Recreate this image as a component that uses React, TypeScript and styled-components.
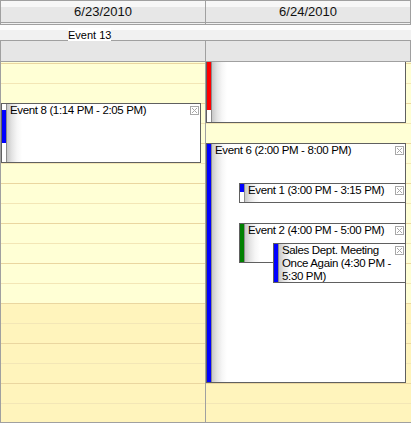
import styled, { createGlobalStyle } from "styled-components"

const GlobalStyle = createGlobalStyle`
	body {
		margin: 0;
		background: #fff;
	}
`

const SLOT_H = 20
const START_HOUR = 11
const SLOT_COUNT = 20
const BUSINESS_END = 18

interface CalEvent {
	id: string
	text: string
	color: string
	top: number
	height: number
	left: number
	width: number
	/** colour bar inside the strip, px relative to box inner top; full height if omitted */
	bar?: { top: number; height: number }
}

const day1Events: CalEvent[] = [
	{
		id: "e8",
		text: "Event 8 (1:14 PM - 2:05 PM)",
		color: "#0000ff",
		top: 80,
		height: 60,
		left: 0,
		width: 200,
		bar: { top: 6, height: 33 }
	}
]

// the first event is scrolled up, only its lower part is in view
const day2Events: CalEvent[] = [
	{
		id: "e4",
		text: "",
		color: "#ff0000",
		top: 20,
		height: 80,
		left: 0,
		width: 200,
		bar: { top: 0, height: 66 }
	},
	{
		id: "e6",
		text: "Event 6 (2:00 PM - 8:00 PM)",
		color: "#0000ff",
		top: 120,
		height: 240,
		left: 0,
		width: 200
	},
	{
		id: "e1",
		text: "Event 1 (3:00 PM - 3:15 PM)",
		color: "#0000ff",
		top: 160,
		height: 20,
		left: 33,
		width: 167,
		bar: { top: 0, height: 8 }
	},
	{
		id: "e2",
		text: "Event 2 (4:00 PM - 5:00 PM)",
		color: "#008000",
		top: 200,
		height: 40,
		left: 33,
		width: 167
	},
	{
		id: "sales",
		text: "Sales Dept. Meeting Once Again (4:30 PM - 5:30 PM)",
		color: "#0000ff",
		top: 220,
		height: 40,
		left: 67,
		width: 133
	}
]

const slots = Array.from({ length: SLOT_COUNT }, (_, i) => {
	const hour = START_HOUR + i / 2
	return { key: i, isHour: i % 2 === 0, business: hour < BUSINESS_END }
})

const CloseIcon = () => (
	<svg width="9" height="9" viewBox="0 0 9 9">
		<rect x="0.5" y="0.5" width="8" height="8" fill="#fff" stroke="#a8a8a8" />
		<path d="M2 2 L7 7 M7 2 L2 7" stroke="#a8a8a8" strokeWidth="1" />
	</svg>
)

const EventBox = ({ ev }: { ev: CalEvent }) => (
	<Box style={{ top: ev.top, height: ev.height, left: ev.left, width: ev.width }}>
		<Strip>
			<Bar
				$color={ev.color}
				style={ev.bar ? { top: ev.bar.top, height: ev.bar.height } : { top: 0, bottom: 0 }}
			/>
		</Strip>
		<EventBody>{ev.text}</EventBody>
		<Close>
			<CloseIcon />
		</Close>
	</Box>
)

const DayColumn = ({ events }: { events: CalEvent[] }) => (
	<Column>
		{slots.map((s) => (
			<Slot key={s.key} $hour={s.isHour} $business={s.business} />
		))}
		{events.map((ev) => (
			<EventBox key={ev.id} ev={ev} />
		))}
	</Column>
)

const App = () => {
	return (
		<Calendar>
			<GlobalStyle />
			<Header>
				<HeaderCol>
					<DateCell>6/23/2010</DateCell>
					<HeaderGap />
				</HeaderCol>
				<HeaderCol>
					<DateCell>6/24/2010</DateCell>
					<HeaderGap />
				</HeaderCol>
			</Header>
			<AllDayRow>
				<AllDayText>Event 13</AllDayText>
			</AllDayRow>
			<GrayRow>
				<GrayCell />
				<GrayCell />
			</GrayRow>
			<Viewport>
				<ScrollContent>
					<DayColumn events={day1Events} />
					<DayColumn events={day2Events} />
				</ScrollContent>
			</Viewport>
		</Calendar>
	)
}

export default App

// Styled Components

const Calendar = styled.div`
	width: 411px;
	height: 423px;
	overflow: hidden;
	font-family: "Liberation Sans", Arial, sans-serif;
	color: #000;
`

const Header = styled.div`
	display: grid;
	grid-template-columns: 204px 204px;
	column-gap: 1px;
	background: #a0a0a0;
	border: 1px solid #a0a0a0;
`

const HeaderCol = styled.div`
	display: flex;
	flex-direction: column;
`

const DateCell = styled.div`
	height: 21px;
	line-height: 21px;
	font-size: 13px;
	text-align: center;
	color: #111;
	background: linear-gradient(#f7f7f7 0, #f7f7f7 6px, #e7e7e7 6px);
	border-bottom: 1px solid #a0a0a0;
`

const HeaderGap = styled.div`
	height: 1px;
	background: #f0f0f0;
`

const AllDayRow = styled.div`
	height: 15px;
	background: linear-gradient(#fcfcfc 0, #fcfcfc 5px, #f1f1f1 5px);
`

const AllDayText = styled.span`
	display: inline-block;
	margin-left: 68px;
	padding-top: 1px;
	line-height: 13px;
	font-size: 11px;
	background: #fff;
`

const GrayRow = styled.div`
	display: grid;
	grid-template-columns: 204px 204px;
	column-gap: 1px;
	background: #a0a0a0;
	border: 1px solid #a0a0a0;
`

const GrayCell = styled.div`
	height: 20px;
	background: #e6e6e6;
`

const Viewport = styled.div`
	height: 360px;
	overflow: hidden;
	border-left: 1px solid #a0a0a0;
	border-bottom: 1px solid #a0a0a0;
`

const ScrollContent = styled.div`
	display: grid;
	grid-template-columns: 204px 205px;
	column-gap: 1px;
	background: #a0a0a0;
	margin-top: -39px;
`

const Column = styled.div`
	position: relative;
	display: flex;
	flex-direction: column;
`

const Slot = styled.div<{ $hour: boolean; $business: boolean }>`
	height: ${SLOT_H - 1}px;
	border-top: 1px solid ${(p) => (p.$hour ? "#ead6a0" : "#f3e6b6")};
	background: ${(p) => (p.$business ? "#ffffd5" : "#fff4bc")};
`

const Box = styled.div`
	position: absolute;
	box-sizing: border-box;
	display: flex;
	border: 1px solid #606060;
	background: #fff;
	overflow: hidden;
`

const Strip = styled.div`
	position: relative;
	flex: 0 0 4px;
	background: #fff;
	border-right: 1px solid #8c8c8c;
`

const Bar = styled.div<{ $color: string }>`
	position: absolute;
	left: 0;
	right: 0;
	background: ${(p) => p.$color};
`

const EventBody = styled.div`
	flex: 1;
	padding: 0 4px 0 3px;
	font-size: 11.5px;
	line-height: 13px;
	letter-spacing: -0.35px;
	color: #000;
	background: linear-gradient(to right, #c8c8c8 0, #e4e4e4 5px, #f6f6f6 10px, #fff 15px);
`

const Close = styled.div`
	position: absolute;
	top: 2px;
	right: 1px;
	width: 9px;
	height: 9px;
	line-height: 0;
`
